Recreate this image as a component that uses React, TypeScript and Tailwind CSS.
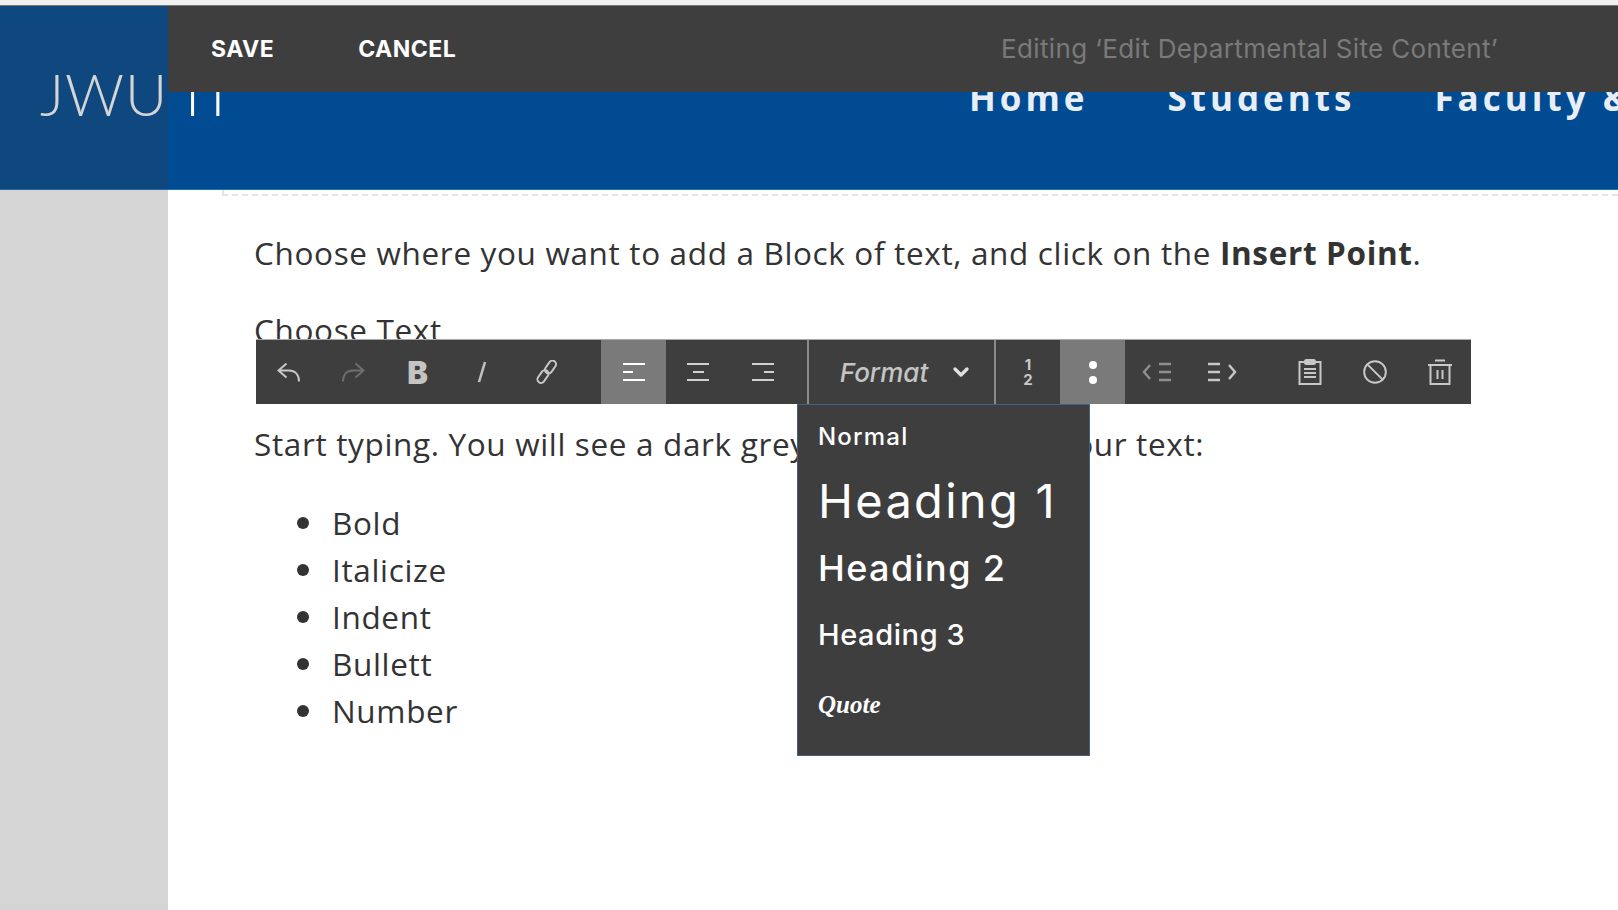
import { Ban, ChevronDown } from 'lucide-react'

const ui = "font-['Inter','Liberation_Sans',sans-serif]"

function Undo({ flip = false, dim = false }: { flip?: boolean; dim?: boolean }) {
  return (
    <svg width="24" height="20" viewBox="0 0 24 20" fill="none" stroke={dim ? '#6e6e6e' : '#c8c8c8'} strokeWidth="2" className={flip ? '-scale-x-100' : 'ml-[2px]'}>
      <path d="M9.5 1.5 1.5 8.5l8 7M1.5 8.5H12c6 0 10 4 10 11" />
    </svg>
  )
}

function Bars({ mode }: { mode: 'left' | 'center' | 'right' }) {
  const mid = mode === 'left' ? 'M1 10h10' : mode === 'center' ? 'M7 10h11' : 'M13 10h10'
  return (
    <svg width="24" height="20" viewBox="0 0 24 20" fill="none" stroke={mode === 'left' ? '#ffffff' : '#d0d0d0'} strokeWidth="2">
      <path d={`M1 2h22${mid}M1 18h22`} />
    </svg>
  )
}

function LinkIcon() {
  return (
    <svg width="22" height="24" viewBox="0 0 22 24" fill="none" stroke="#c8c8c8" strokeWidth="2">
      <rect x="-7" y="-3.6" width="14" height="7.2" rx="3.6" transform="translate(7 16.5) rotate(-55)" />
      <rect x="-7" y="-3.6" width="14" height="7.2" rx="3.6" transform="translate(14.5 7) rotate(-55)" />
    </svg>
  )
}

function Outdent() {
  return (
    <svg width="30" height="20" viewBox="0 0 30 20" fill="none" stroke="#8f8f8f" strokeWidth="2.4">
      <path d="M8 3 2 10l6 7M17 2h12M17 10h12M17 18h12" />
    </svg>
  )
}

function Indent() {
  return (
    <svg width="30" height="20" viewBox="0 0 30 20" fill="none" stroke="#c8c8c8" strokeWidth="2.4">
      <path d="M1 2h12M1 10h12M1 18h12M22 3l6 7-6 7" />
    </svg>
  )
}

function Clipboard() {
  return (
    <svg width="24" height="26" viewBox="0 0 24 26" fill="none" stroke="#c8c8c8" strokeWidth="2">
      <path d="M7 3H1.5v22h21V3H17" />
      <rect x="7" y="1" width="10" height="4" rx="1.5" fill="#c8c8c8" />
      <path d="M6 10h12M6 14h12M6 18h12" />
    </svg>
  )
}

function Trash() {
  return (
    <svg width="24" height="26" viewBox="0 0 24 26" fill="none" stroke="#c8c8c8" strokeWidth="2">
      <path d="M7 1.5h10M0 6h24M2.5 6v19h19V6M9.5 11v9M14.5 11v9" />
    </svg>
  )
}

function Btn({ children, active = false }: { children?: React.ReactNode; active?: boolean }) {
  return (
    <div className={`w-[64.6px] h-full flex items-center justify-center shrink-0 ${active ? 'bg-[#7a7a7a]' : ''}`}>
      {children}
    </div>
  )
}

function Toolbar() {
  return (
    <div className={`absolute left-[256px] top-[339px] w-[1215px] h-[65px] bg-[#3e3e3e] border-t border-[#a8a8a8] flex ${ui}`}>
      <Btn><Undo /></Btn>
      <Btn><Undo flip dim /></Btn>
      <Btn><span className="text-[31px] font-black text-[#c4c4c4] leading-none">B</span></Btn>
      <Btn>
        <svg width="10" height="22" viewBox="0 0 10 22" stroke="#c0c0c0" strokeWidth="2.6"><path d="M8 1 2 21" /></svg>
      </Btn>
      <Btn><LinkIcon /></Btn>
      <div className="w-[22.5px] shrink-0" />
      <Btn active><Bars mode="left" /></Btn>
      <Btn><Bars mode="center" /></Btn>
      <Btn><Bars mode="right" /></Btn>
      <div className="w-[13.5px] shrink-0 border-r-2 border-[#8a8a8a]" />
      <div className="w-[187px] h-full shrink-0 flex items-center pl-[31px] border-r-2 border-[#8a8a8a]">
        <span className="text-[26px] italic font-medium text-[#c4c4c4]">Format</span>
        <ChevronDown className="ml-[21px] w-[24px] h-[24px] text-[#e0e0e0]" strokeWidth={3.4} />
      </div>
      <Btn>
        <div className="flex flex-col items-center text-[#c8c8c8] text-[15px] font-bold leading-[15px]">
          <span>1</span>
          <span>2</span>
        </div>
      </Btn>
      <Btn active>
        <div className="flex flex-col gap-[7px]">
          <div className="w-[8px] h-[8px] rounded-full bg-white" />
          <div className="w-[8px] h-[8px] rounded-full bg-white" />
        </div>
      </Btn>
      <Btn><Outdent /></Btn>
      <Btn><Indent /></Btn>
      <div className="w-[24px] shrink-0" />
      <Btn><Clipboard /></Btn>
      <Btn><Ban className="w-[26px] h-[26px] text-[#c8c8c8]" strokeWidth={1.8} /></Btn>
      <Btn><Trash /></Btn>

      <div className="absolute left-[541px] top-[64px] w-[293px] h-[352px] bg-[#3e3e3e] border border-[#46607c] pl-[20px] pt-[15px] text-white">
        <div className="h-[34px] flex items-center text-[24px] font-medium tracking-[1.2px]">Normal</div>
        <div className="h-[68px] mt-[13px] flex items-center text-[47px] tracking-[2.3px]">Heading 1</div>
        <div className="h-[52px] mt-[7px] flex items-center text-[36px] font-medium tracking-[1.4px]">Heading 2</div>
        <div className="h-[40px] mt-[21px] flex items-center text-[29px] font-medium tracking-[0.6px]">Heading 3</div>
        <div className="h-[40px] mt-[30px] flex items-center text-[25px] italic font-bold font-['Liberation_Serif',serif]">Quote</div>
      </div>
    </div>
  )
}

const bullets = ['Bold', 'Italicize', 'Indent', 'Bullett', 'Number']

export default function App() {
  return (
    <div className="relative w-[1618px] h-[910px] overflow-hidden bg-white font-['Open_Sans',sans-serif]">
      <div className="h-[6px] bg-[#f0f0f0] border-b border-[#777]" />

      <header className="relative h-[184px] bg-[#004b91] flex items-start border-b border-[#1f6fb5]">
        <div className="ml-[40px] mt-[52px] text-[58px] leading-[72px] font-light tracking-[1px] text-white font-['Lato',sans-serif]">JWU IT</div>
        <nav className="absolute left-[969px] top-[69px] flex gap-[79px] text-[35px] leading-[46px] font-bold tracking-[4px] text-[#e9eef6] whitespace-nowrap">
          <span>Home</span>
          <span>Students</span>
          <span>Faculty &amp; Staff</span>
        </nav>
      </header>

      <div className="ml-[222px] h-[6px] border-l-2 border-b-2 border-dashed border-[#e4e4e4]" />

      <main className="ml-[222px] h-[720px] pl-[32px] pt-[33px] text-[31.5px] leading-[47px] text-[#333] tracking-[0.65px]">
        <p className="mb-[30px] whitespace-nowrap">
          Choose where you want to add a Block of text, and click on the <b>Insert Point</b>.
        </p>
        <p className="mb-[67px]">Choose Text</p>
        <p className="mb-[32px] whitespace-nowrap">Start typing. You will see a dark grey bar right above your text:</p>
        <ul className="pl-[43px] flex flex-col">
          {bullets.map(b => (
            <li key={b} className="flex items-center gap-[23px]">
              <span className="w-[12px] h-[12px] rounded-full bg-[#333] shrink-0" />
              {b}
            </li>
          ))}
        </ul>
      </main>

      {/* grey overlay down the left side */}
      <div className="absolute left-0 top-[6px] bottom-0 w-[168px] bg-[#3e3e3e]/[.22]" />

      <div className={`absolute left-[168px] right-0 top-[6px] h-[85.5px] bg-[#3e3e3e] flex items-center ${ui}`}>
        <span className="ml-[43px] text-[23px] font-bold tracking-[0.5px] text-white">SAVE</span>
        <span className="ml-[84px] text-[23px] font-bold tracking-[0.5px] text-white">CANCEL</span>
        <span className="ml-auto mr-[120px] text-[26px] tracking-[0.35px] text-[#7a7a7a]">Editing ‘Edit Departmental Site Content’</span>
      </div>

      <Toolbar />
    </div>
  )
}
